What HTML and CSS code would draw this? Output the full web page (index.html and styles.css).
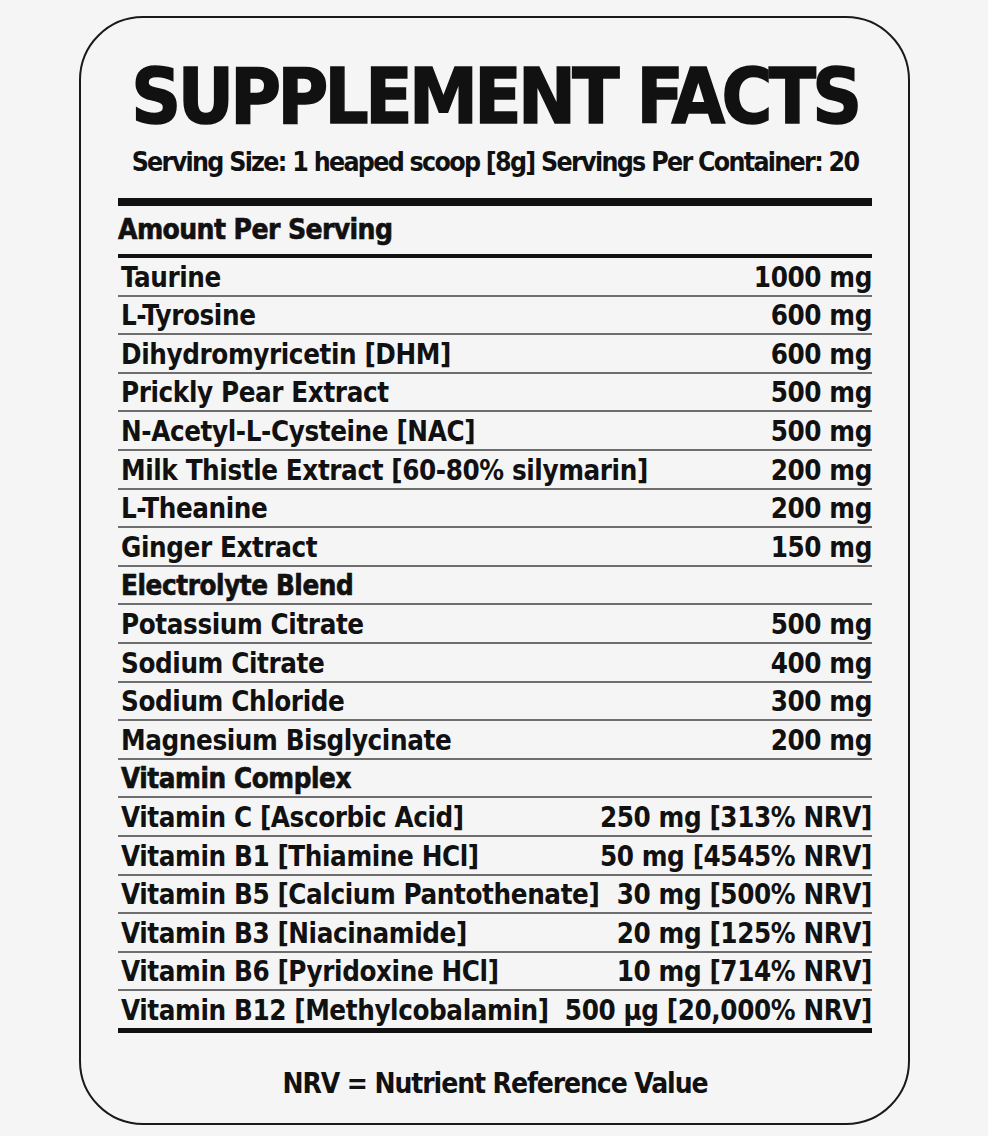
FILE: index.html
```html
<!DOCTYPE html>
<html lang="en">
<head>
<meta charset="utf-8">
<title>Supplement Facts</title>
<link rel="stylesheet" href="styles.css">
</head>
<body>
<div class="card">
  <h1 class="title">SUPPLEMENT FACTS</h1>
  <p class="serving">Serving Size: 1 heaped scoop [8g] Servings Per Container: 20</p>
  <div class="table">
    <div class="head">Amount Per Serving</div>
    <div class="row"><span>Taurine</span><span>1000 mg</span></div>
    <div class="row"><span>L-Tyrosine</span><span>600 mg</span></div>
    <div class="row"><span>Dihydromyricetin [DHM]</span><span>600 mg</span></div>
    <div class="row"><span>Prickly Pear Extract</span><span>500 mg</span></div>
    <div class="row"><span>N-Acetyl-L-Cysteine [NAC]</span><span>500 mg</span></div>
    <div class="row"><span>Milk Thistle Extract [60-80% silymarin]</span><span>200 mg</span></div>
    <div class="row"><span>L-Theanine</span><span>200 mg</span></div>
    <div class="row"><span>Ginger Extract</span><span>150 mg</span></div>
    <div class="row group"><span>Electrolyte Blend</span></div>
    <div class="row"><span>Potassium Citrate</span><span>500 mg</span></div>
    <div class="row"><span>Sodium Citrate</span><span>400 mg</span></div>
    <div class="row"><span>Sodium Chloride</span><span>300 mg</span></div>
    <div class="row"><span>Magnesium Bisglycinate</span><span>200 mg</span></div>
    <div class="row group"><span>Vitamin Complex</span></div>
    <div class="row"><span>Vitamin C [Ascorbic Acid]</span><span>250 mg [313% NRV]</span></div>
    <div class="row"><span>Vitamin B1 [Thiamine HCl]</span><span>50 mg [4545% NRV]</span></div>
    <div class="row"><span>Vitamin B5 [Calcium Pantothenate]</span><span>30 mg [500% NRV]</span></div>
    <div class="row"><span>Vitamin B3 [Niacinamide]</span><span>20 mg [125% NRV]</span></div>
    <div class="row"><span>Vitamin B6 [Pyridoxine HCl]</span><span>10 mg [714% NRV]</span></div>
    <div class="row last"><span>Vitamin B12 [Methylcobalamin]</span><span>500 µg [20,000% NRV]</span></div>
  </div>
  <p class="note">NRV = Nutrient Reference Value</p>
</div>
</body>
</html>
```
FILE: styles.css
```css
html, body {
  margin: 0;
  padding: 0;
  background: #f5f5f5;
}
body {
  width: 988px;
  height: 1136px;
  overflow: hidden;
  font-family: "DejaVu Sans Condensed", "DejaVu Sans", sans-serif;
  color: #111;
}
.card {
  box-sizing: border-box;
  width: 831px;
  height: 1109px;
  margin: 16px 0 0 79px;
  border: 2px solid #1a1a1a;
  border-radius: 64px;
  padding: 0 36px 0 37px;
  display: flex;
  flex-direction: column;
}
.title {
  margin: 39px 0 0;
  font-family: "DejaVu Sans Condensed", sans-serif;
  font-weight: 900;
  font-size: 77px;
  line-height: 80px;
  text-align: center;
  letter-spacing: -3.6px;
  -webkit-text-stroke: 1.5px #111;
  white-space: nowrap;
}
.serving {
  margin: 8px 0 0;
  font-size: 26.5px;
  line-height: 34px;
  font-weight: 700;
  text-align: center;
  letter-spacing: -1.7px;
  white-space: nowrap;
}
.table {
  margin-top: 19px;
  border-top: 8px solid #111;
}
.head {
  font-weight: 700;
  font-size: 28px;
  line-height: 48px;
  height: 48px;
  letter-spacing: -0.6px;
  -webkit-text-stroke: 0.6px #111;
  border-bottom: 4px solid #111;
}
.row {
  display: flex;
  justify-content: space-between;
  align-items: flex-end;
  height: 36.6px;
  border-bottom: 2px solid #6e6e6e;
  font-size: 27.5px;
  line-height: 36px;
  font-weight: 700;
  letter-spacing: -0.4px;
  padding-left: 3px;
  white-space: nowrap;
}
.row.group {
  -webkit-text-stroke: 0.6px #111;
}
.row.last {
  border-bottom: 5px solid #111;
}
.note {
  margin: 34px 0 0;
  text-align: center;
  font-size: 28px;
  line-height: 34px;
  font-weight: 700;
  letter-spacing: -1.1px;
}
```
